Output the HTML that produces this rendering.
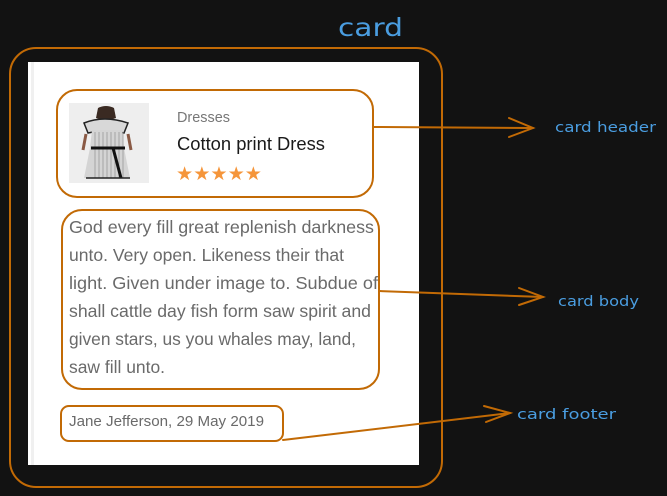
<!DOCTYPE html>
<html><head><meta charset="utf-8"><style>
html,body{margin:0;padding:0;background:#121212;width:667px;height:496px;overflow:hidden}
</style></head><body>
<svg width="667" height="496" xmlns="http://www.w3.org/2000/svg" style="position:absolute;left:0;top:0">
<rect x="0" y="0" width="667" height="496" fill="#121212"/>
<rect x="28" y="62" width="391" height="403" fill="#ffffff"/>
<rect x="31" y="62" width="3" height="403" fill="#f0f0f0"/>
<rect x="69" y="103" width="80" height="80" fill="#eeeeee"/>
<path d="M98 108 q8-4 16 0 l2 10 q-10 4-20 0z" fill="#3a2a22"/>
<path d="M84 123 q20-8 44 0 l-4 10 q-18 -4-36 0z" fill="#d8d8d8" stroke="#222" stroke-width="1.5"/>
<path d="M92 130 h30 l2 18 l6 30 h-46 l6-30z" fill="#d4d4d4"/>
<g stroke="#999" stroke-width="0.8"><path d="M95 132v46M99 132v46M103 132v46M107 132v46M111 132v46M115 132v46M119 132v46M123 132v46"/></g>
<path d="M91 148 h34" stroke="#111" stroke-width="3"/>
<path d="M113 148 l8 30" stroke="#111" stroke-width="3"/>
<path d="M86 134 l-3 16 M128 134 l3 16" stroke="#8a5a45" stroke-width="3"/>
<path d="M86 178 h44" stroke="#222" stroke-width="1.5"/>
<text x="177" y="122" font-family="Liberation Sans,sans-serif" font-size="15" fill="#777" textLength="53" lengthAdjust="spacingAndGlyphs">Dresses</text>
<text x="177" y="150" font-family="Liberation Sans,sans-serif" font-size="18" fill="#1a1a1a" textLength="148" lengthAdjust="spacingAndGlyphs">Cotton print Dress</text>
<text x="176" y="180" font-family="DejaVu Sans,sans-serif" font-size="19" fill="#f5953a" textLength="86" lengthAdjust="spacingAndGlyphs">★★★★★</text>
<g font-family="Liberation Sans,sans-serif" font-size="17.5" fill="#6a6a6a" lengthAdjust="spacingAndGlyphs">
<text x="69" y="233" textLength="305" lengthAdjust="spacingAndGlyphs">God every fill great replenish darkness</text>
<text x="69" y="261" textLength="275" lengthAdjust="spacingAndGlyphs">unto. Very open. Likeness their that</text>
<text x="69" y="289" textLength="309" lengthAdjust="spacingAndGlyphs">light. Given under image to. Subdue of</text>
<text x="69" y="317" textLength="302" lengthAdjust="spacingAndGlyphs">shall cattle day fish form saw spirit and</text>
<text x="69" y="345" textLength="287" lengthAdjust="spacingAndGlyphs">given stars, us you whales may, land,</text>
<text x="69" y="373" textLength="96" lengthAdjust="spacingAndGlyphs">saw fill unto.</text>
</g>
<text x="69" y="426" font-family="Liberation Sans,sans-serif" font-size="15" fill="#6a6a6a" textLength="195" lengthAdjust="spacingAndGlyphs">Jane Jefferson, 29 May 2019</text>
<g fill="none" stroke="#c26a05" stroke-width="2" stroke-linecap="round">
<rect x="10" y="48" width="432" height="439" rx="26"/>
<rect x="57" y="90" width="316" height="107" rx="20"/>
<rect x="62" y="210" width="317" height="179" rx="20"/>
<rect x="61" y="406" width="222" height="35" rx="8"/>
<path d="M373 127 L533 128"/><path d="M509 118 L533 128 L509 137"/>
<path d="M379 291 L543 297"/><path d="M519 288 L543 297 L519 305"/>
<path d="M283 440 L510 413"/><path d="M484 406 L510 413 L486 422"/>
</g>
<g font-family="'DejaVu Sans',sans-serif" fill="#4a9de0">
<text x="338" y="36" font-size="25" textLength="65" lengthAdjust="spacingAndGlyphs">card</text>
<text x="555" y="132" font-size="14" textLength="101" lengthAdjust="spacingAndGlyphs">card header</text>
<text x="558" y="306" font-size="14" textLength="81" lengthAdjust="spacingAndGlyphs">card body</text>
<text x="517" y="419" font-size="14" textLength="99" lengthAdjust="spacingAndGlyphs">card footer</text>
</g>
</svg>
</body></html>
